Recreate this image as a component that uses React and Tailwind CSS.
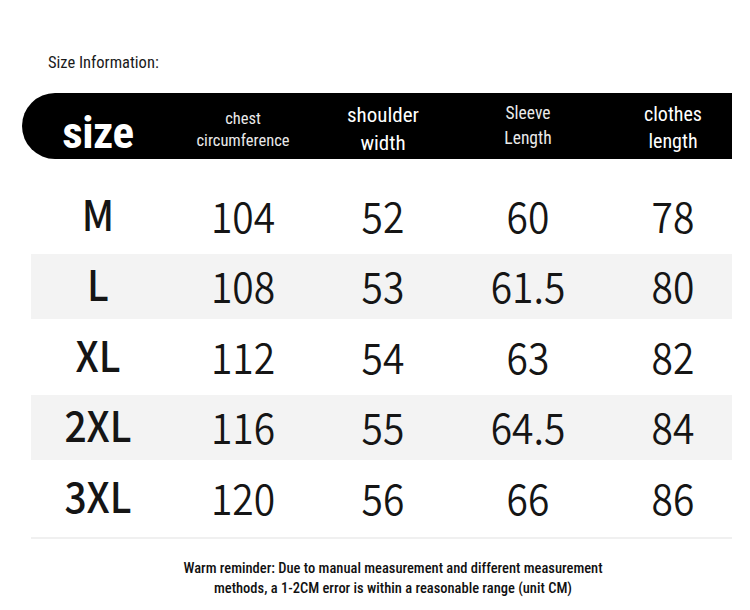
const rows = [
  ["M", "104", "52", "60", "78"],
  ["L", "108", "53", "61.5", "80"],
  ["XL", "112", "54", "63", "82"],
  ["2XL", "116", "55", "64.5", "84"],
  ["3XL", "120", "56", "66", "86"],
];

const cond = { fontFamily: "'Roboto Condensed', 'Liberation Sans', sans-serif" };
const cjk = { fontFamily: "'Noto Sans CJK SC', 'Noto Sans', sans-serif" };

function Cell({ children, bold, first, last }) {
  return (
    <div
      className={
        "flex items-center justify-center " +
        (last ? "pl-[12px] " : "") +
        (first ? "pr-[9px]" : "")
      }
    >
      <span
        className={
          "inline-block text-[39px] leading-none text-[#151515] scale-y-[1.08] " +
          (bold ? "font-medium -translate-y-[3px]" : "font-[350] -translate-y-[1px]")
        }
        style={cjk}
      >
        {children}
      </span>
    </div>
  );
}

export default function App() {
  return (
    <div className="w-[750px] h-[610px] bg-white overflow-hidden" style={cond}>
      <div className="pl-[48px] pt-[52px] h-[93px] text-[16.5px] leading-[22px] text-[#1a1a1a]">
        Size Information:
      </div>

      <div className="ml-[22px] w-[710px] h-[66px] bg-black rounded-l-[34px] grid grid-cols-[152px_138px_142px_148px_1fr] items-center text-white">
        <div className="flex justify-center">
          <span className="text-[45px] font-bold leading-none tracking-[-0.5px] translate-y-[6px]">size</span>
        </div>
        <div className="flex flex-col items-center text-[16.5px] leading-[22px] text-[#eaeaea] translate-y-[4px]">
          <span>chest</span>
          <span>circumference</span>
        </div>
        <div className="flex flex-col items-center text-[21px] leading-[28px] translate-y-[3px]">
          <span>shoulder</span>
          <span>width</span>
        </div>
        <div className="flex flex-col items-center text-[17.5px] leading-[25px] text-[#eaeaea]">
          <span>Sleeve</span>
          <span>Length</span>
        </div>
        <div className="flex flex-col items-center pl-[12px] text-[20px] leading-[27px] translate-y-[2px]">
          <span>clothes</span>
          <span>length</span>
        </div>
      </div>

      <div className="mt-[22px] ml-[31px] w-[701px]">
        {rows.map((r, i) => (
          <div key={r[0]} className="h-[70.5px] flex items-center">
            <div
              className={
                "w-full h-[65px] grid grid-cols-[143px_138px_142px_148px_1fr] items-center " +
                (i % 2 === 1 ? "bg-[#f3f3f3]" : "bg-white")
              }
            >
              <Cell bold first>{r[0]}</Cell>
              <Cell>{r[1]}</Cell>
              <Cell>{r[2]}</Cell>
              <Cell>{r[3]}</Cell>
              <Cell last>{r[4]}</Cell>
            </div>
          </div>
        ))}
        <div className="mt-[3px] h-[2px] bg-[#f0f0f0]" />
      </div>

      <div className="mt-[20px] flex flex-col items-center pl-[36px] text-[14.5px] leading-[20px] font-medium text-[#111]">
        <span>Warm reminder: Due to manual measurement and different measurement</span>
        <span>methods, a 1-2CM error is within a reasonable range (unit CM)</span>
      </div>
    </div>
  );
}
